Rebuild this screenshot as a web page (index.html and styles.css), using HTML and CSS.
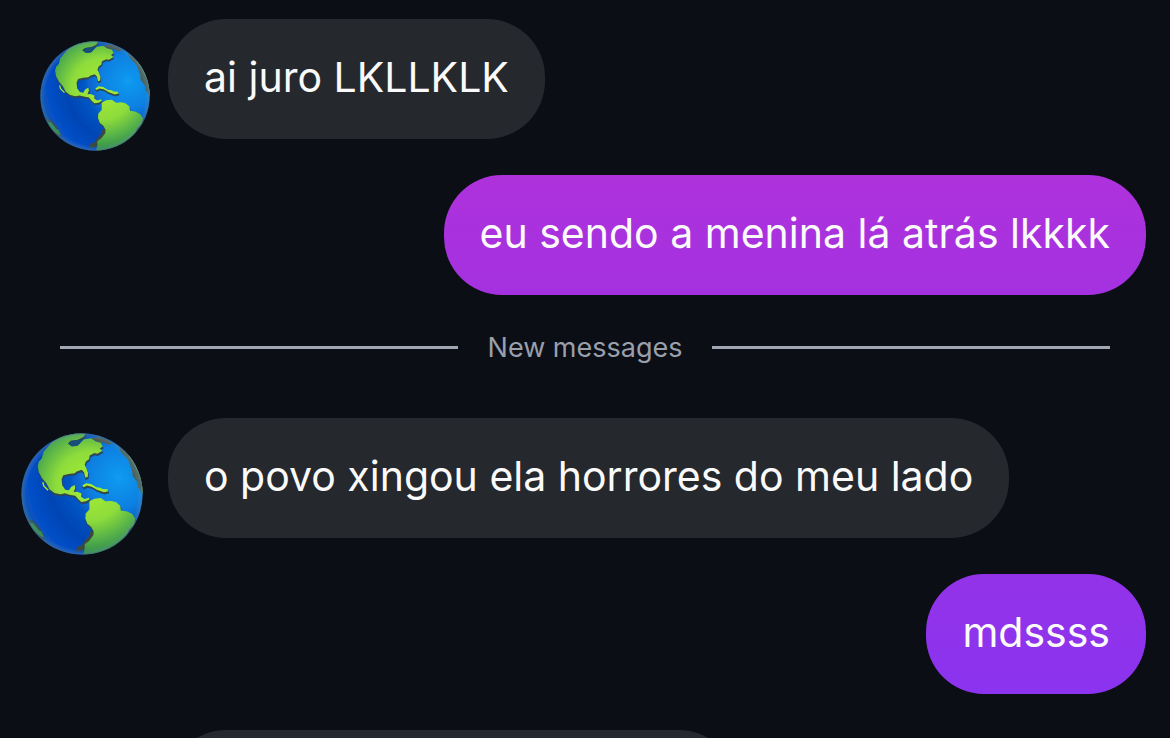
FILE: index.html
```html
<!DOCTYPE html>
<html lang="pt">
<head>
<meta charset="utf-8">
<meta name="viewport" content="width=device-width, initial-scale=1">
<title>Chat</title>
<link rel="stylesheet" href="styles.css">
</head>
<body>
<svg class="defs" aria-hidden="true">
  <defs>
    <radialGradient id="ocean" gradientUnits="userSpaceOnUse" cx="320" cy="160" r="300">
      <stop offset="0" stop-color="#129bf0"/>
      <stop offset=".3" stop-color="#0c80e2"/>
      <stop offset=".5" stop-color="#0555c4"/>
      <stop offset=".7" stop-color="#0444b4"/>
      <stop offset=".9" stop-color="#0650c8"/>
      <stop offset="1" stop-color="#0b55b0"/>
    </radialGradient>
    <radialGradient id="land" gradientUnits="userSpaceOnUse" cx="235" cy="185" r="205">
      <stop offset="0" stop-color="#a8ee34"/>
      <stop offset=".5" stop-color="#8edc3b"/>
      <stop offset=".78" stop-color="#55b149"/>
      <stop offset="1" stop-color="#2f8c4c"/>
    </radialGradient>
    <radialGradient id="rim" gradientUnits="userSpaceOnUse" cx="210" cy="209" r="182">
      <stop offset=".91" stop-color="#7f9fa5" stop-opacity="0"/>
      <stop offset=".97" stop-color="#6a93a5" stop-opacity=".25"/>
      <stop offset="1" stop-color="#2c4a60" stop-opacity=".85"/>
    </radialGradient>
    <filter id="soft"><feGaussianBlur stdDeviation="2"/></filter>
    <filter id="smooth"><feGaussianBlur stdDeviation="1"/></filter>
    <clipPath id="disc"><circle cx="210" cy="209" r="181"/></clipPath>
    <g id="continents">
      <path d="M95 84L90 103L81 113L78 126L81 143L91 162L104 177L113 195L128 206L146 210L159 207L173 211L190 214L199 225L208 233L222 231L233 225L230 220L218 224L208 218L208 207L195 202L185 203L190 191L188 182L178 187L171 198L160 196L151 183L149 165L154 153L170 149L188 147L194 142L209 137L216 144L220 160L227 158L228 146L223 132L218 122L222 111L231 105L233 94L247 87L256 89L271 80L263 73L272 67L266 56L251 52L237 43L216 46L205 57L196 65L179 66L168 58L176 50L198 47L214 39L221 29L190 25L145 38L118 57Z"/>
      <path d="M232 231L247 223L266 221L280 231L297 230L311 233L324 244L326 258L345 261L360 269L369 283L365 301L350 316L343 334L324 353L308 367L287 378L267 382L240 389L214 389L218 371L218 359L231 349L244 332L245 321L237 307L226 298L220 282L221 267L232 255Z"/>
      <path d="M211 184L222 177L237 179L253 189L265 190L272 194L286 195L288 201L276 204L265 200L256 197L239 187L225 184L215 189Z"/>
      <path d="M54 295L64 296L72 306L82 318L90 322L96 339L83 332L65 316Z"/>
    </g>
    <g id="globe" filter="url(#smooth)">
      <circle cx="210" cy="209" r="181" fill="url(#ocean)"/>
      <g clip-path="url(#disc)">
        <g filter="url(#soft)">
          <use href="#continents" fill="#39483f" stroke="#25476b" stroke-width="3" transform="translate(1 5)"/>
          <path fill="#4c625b" d="M318 67L344 85L357 106L372 132L386 162L389 207L377 189L375 174L361 155L359 137L347 106L325 83Z"/>
          <path fill="#4c5c57" d="M237 43L260 38L286 47L302 58L288 61L269 53L264 60Z"/>
          <path fill="#315165" d="M46 284L64 288L79 303L90 320L99 341L87 333L71 313L53 303Z"/>
          <path fill="#3c493e" d="M231 320L247 321L243 342L229 353L215 376L193 381L195 367L210 362L220 346L232 335Z"/>
        </g>
        <use href="#continents" fill="url(#land)"/>
        <path fill="#174f78" d="M168 58L180 50L210 46L203 59L196 65L180 67Z"/>
        <path d="M93 174L96 185L109 198" fill="none" stroke="#b0e438" stroke-width="4"/>
        <path d="M349 92L366 117L381 148L390 178L391 207" fill="none" stroke="#a3b83e" stroke-width="4"/>
        <circle cx="210" cy="209" r="182" fill="url(#rim)"/>
      </g>
    </g>
  </defs>
</svg>

<main class="chat">
  <article class="message incoming">
    <div class="sender">
      <svg class="avatar avatar-small" viewBox="28 27 364 364" role="img" aria-label="Globo"><use href="#globe"/></svg>
    </div>
    <p class="bubble">ai juro LKLLKLK</p>
  </article>

  <article class="message outgoing">
    <p class="bubble orchid">eu sendo a menina lá atrás lkkkk</p>
  </article>

  <div class="divider" role="separator"><span class="divider-label">New messages</span></div>

  <article class="message incoming">
    <div class="sender">
      <svg class="avatar avatar-large" viewBox="28 27 364 364" role="img" aria-label="Globo"><use href="#globe"/></svg>
    </div>
    <p class="bubble">o povo xingou ela horrores do meu lado</p>
  </article>

  <article class="message outgoing">
    <p class="bubble violet">mdssss</p>
  </article>

  <article class="message incoming">
    <div class="sender"></div>
    <p class="bubble clipped"></p>
  </article>
</main>
</body>
</html>
```
FILE: styles.css
```css
* { box-sizing: border-box; }

body {
  margin: 0;
  background: #0b0e15;
  color: #fafafa;
  font-family: Inter, "Liberation Sans", sans-serif;
}

.defs {
  position: absolute;
  width: 0;
  height: 0;
}

.chat {
  display: flex;
  flex-direction: column;
  gap: 36px;
  height: 100vh;
  padding: 19px 24px 0 0;
  overflow: hidden;
}

.message {
  display: flex;
  flex-shrink: 0;
}

.outgoing { justify-content: flex-end; }

.sender {
  display: flex;
  flex: 0 0 168px;
  align-items: flex-end;
}

.avatar {
  display: block;
  flex-shrink: 0;
}

.avatar-small {
  width: 110px;
  margin: 0 0 -12px 40px;
}

.avatar-large {
  width: 122px;
  margin: -5px 0 -17px 21px;
}

.bubble {
  min-height: 120px;
  margin: 0;
  padding: 32px 36px 36px;
  border-radius: 58px;
  background: #25282d;
  font-size: 41px;
  line-height: 52px;
}

.orchid { background: linear-gradient(#ae32dc, #a431e0); }

.violet { background: linear-gradient(#9333e9, #8b33ef); }

.clipped { flex: 0 1 569px; }

.divider {
  display: flex;
  flex-shrink: 0;
  align-items: center;
  gap: 30px;
  height: 33px;
  margin: 0 36px 18px 60px;
  color: #9a9fac;
  font-size: 27px;
  line-height: 33px;
}

.divider::before,
.divider::after {
  content: "";
  flex: 1;
  height: 3px;
  background: #a3a7b3;
}
```
